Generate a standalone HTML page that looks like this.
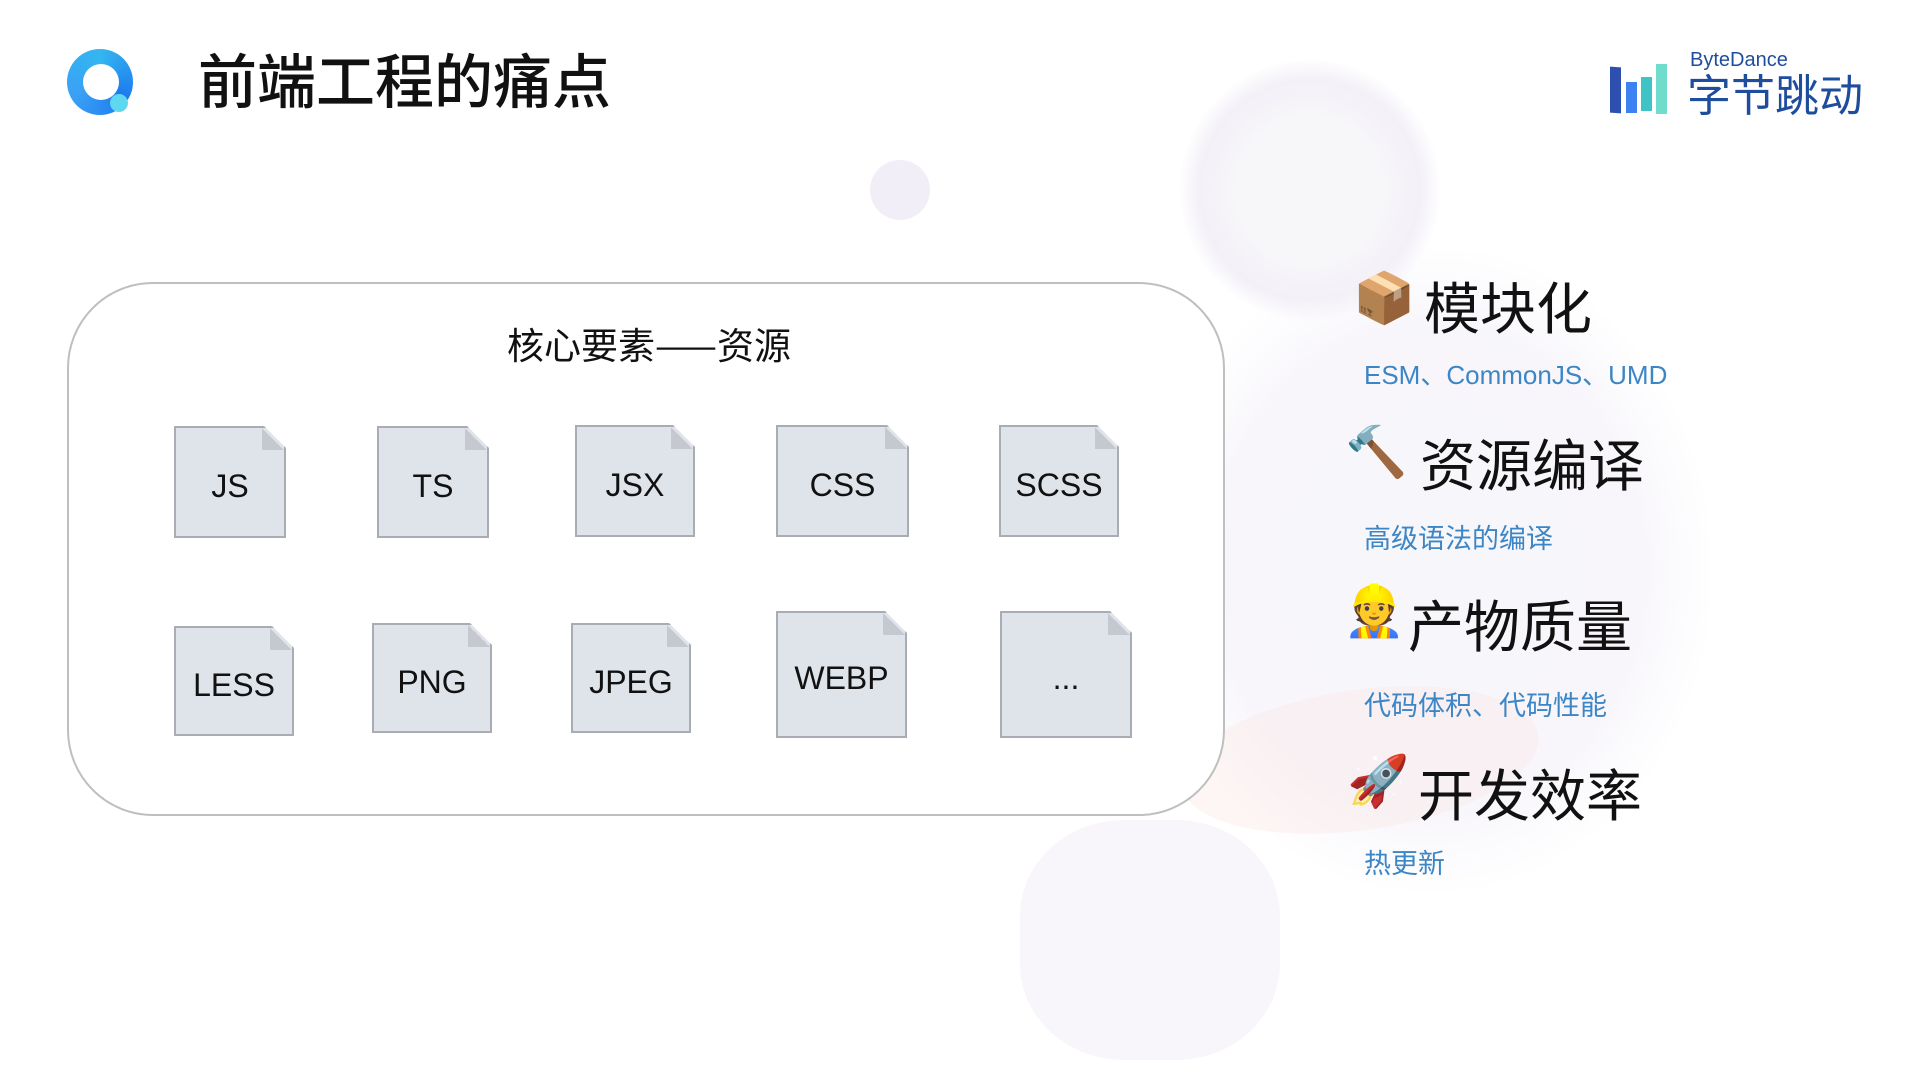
<!DOCTYPE html>
<html><head><meta charset="utf-8"><style>
body{margin:0;width:1920px;height:1080px;overflow:hidden;background:#fff;position:relative;font-family:"Liberation Sans","Noto Sans CJK SC",sans-serif;color:#111}
.a{position:absolute}
.f{position:absolute;background:#dfe3ea;border:2px solid #a9adb3;box-sizing:border-box;clip-path:polygon(0 0,calc(100% - 22px) 0,100% 22px,100% 100%,0 100%);display:flex;align-items:center;justify-content:center;font-size:32px;padding-top:8px}
.f::after{content:"";position:absolute;right:0;top:0;width:22px;height:22px;background:linear-gradient(45deg,#c5c9cf 50%,transparent 50%)}
.h{position:absolute;font-size:56px;line-height:1;font-family:"Noto Sans CJK SC",sans-serif}
.s{position:absolute;font-size:26px;color:#3d86c6;line-height:1;font-family:"Liberation Sans","Noto Sans CJK SC",sans-serif}
.e{position:absolute;font-size:50px;line-height:1;font-family:"Noto Color Emoji",sans-serif}
</style></head><body>
<!-- faint background astronaut -->
<div class="a" style="left:1180px;top:60px;width:260px;height:260px;border-radius:50%;background:radial-gradient(circle,#f7f6f9 40%,#f3f0f7 60%,transparent 72%)"></div>
<div class="a" style="left:1150px;top:250px;width:560px;height:640px;border-radius:45%;background:radial-gradient(ellipse,#f7f6fa 30%,rgba(244,241,248,0.6) 55%,transparent 72%)"></div>
<div class="a" style="left:1180px;top:690px;width:360px;height:140px;border-radius:50%;background:rgba(250,230,225,0.35);transform:rotate(-8deg)"></div>
<div class="a" style="left:1020px;top:820px;width:260px;height:240px;border-radius:40%;background:rgba(242,238,248,0.5)"></div>
<div class="a" style="left:870px;top:160px;width:60px;height:60px;border-radius:50%;background:#f1eef8"></div>
<!-- logo -->
<div class="a" style="left:67px;top:49px;width:66px;height:66px;border-radius:50%;background:conic-gradient(#34b6f0,#1e7bef,#3aa0f5,#34b6f0)"></div>
<div class="a" style="left:83px;top:64px;width:36px;height:36px;border-radius:50%;background:#fff"></div>
<div class="a" style="left:110px;top:94px;width:18px;height:18px;border-radius:50%;background:#5fd7f0"></div>
<div class="a" style="left:198px;top:48px;font-size:59px;font-weight:500;line-height:1;font-family:'Noto Sans CJK SC',sans-serif;color:#111">前端工程的痛点</div>
<!-- bytedance -->
<div class="a" style="left:1610px;top:67px;width:11px;height:46px;background:#2d4fb0;transform:skewY(4deg)"></div>
<div class="a" style="left:1626px;top:82px;width:11px;height:31px;background:#3c82f0"></div>
<div class="a" style="left:1641px;top:77px;width:11px;height:34px;background:#3fc3c7"></div>
<div class="a" style="left:1656px;top:64px;width:11px;height:50px;background:#6fdccc"></div>
<div class="a" style="left:1690px;top:50px;font-size:20px;color:#1e4d9e;line-height:1">ByteDance</div>
<div class="a" style="left:1687px;top:70px;font-size:44px;color:#1e4d9e;line-height:1;font-family:'Noto Sans CJK SC',sans-serif">字节跳动</div>
<!-- box -->
<div class="a" style="left:67px;top:282px;width:1158px;height:534px;border:2px solid #bfbfbf;border-radius:86px;box-sizing:border-box;background:rgba(255,255,255,0.92)"></div>
<div class="a" style="left:449px;top:325px;width:400px;text-align:center;font-size:37px;line-height:1;font-family:'Noto Sans CJK SC',sans-serif">核心要素——资源</div>
<div class="f" style="left:174px;top:426px;width:112px;height:112px">JS</div>
<div class="f" style="left:377px;top:426px;width:112px;height:112px">TS</div>
<div class="f" style="left:575px;top:425px;width:120px;height:112px">JSX</div>
<div class="f" style="left:776px;top:425px;width:133px;height:112px">CSS</div>
<div class="f" style="left:999px;top:425px;width:120px;height:112px">SCSS</div>
<div class="f" style="left:174px;top:626px;width:120px;height:110px">LESS</div>
<div class="f" style="left:372px;top:623px;width:120px;height:110px">PNG</div>
<div class="f" style="left:571px;top:623px;width:120px;height:110px">JPEG</div>
<div class="f" style="left:776px;top:611px;width:131px;height:127px">WEBP</div>
<div class="f" style="left:1000px;top:611px;width:132px;height:127px">...</div>
<!-- right list -->
<div class="e" style="left:1353px;top:274px">📦</div>
<div class="h" style="left:1424px;top:278px">模块化</div>
<div class="s" style="left:1364px;top:362px">ESM、CommonJS、UMD</div>
<div class="e" style="left:1345px;top:428px">🔨</div>
<div class="h" style="left:1420px;top:435px">资源编译</div>
<div class="s" style="left:1364px;top:526px;font-size:27px">高级语法的编译</div>
<div class="e" style="left:1343px;top:587px">👷</div>
<div class="h" style="left:1408px;top:596px">产物质量</div>
<div class="s" style="left:1364px;top:693px;font-size:27px">代码体积、代码性能</div>
<div class="e" style="left:1347px;top:757px">🚀</div>
<div class="h" style="left:1418px;top:765px">开发效率</div>
<div class="s" style="left:1364px;top:851px;font-size:27px">热更新</div>
</body></html>
